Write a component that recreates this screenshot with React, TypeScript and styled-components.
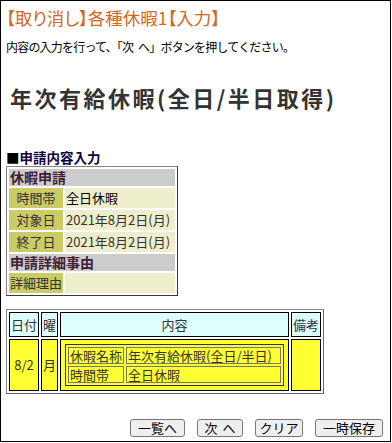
import React from "react";
import styled, { createGlobalStyle } from "styled-components";

const GlobalStyle = createGlobalStyle`
  html, body { margin: 0; padding: 0; background: #fff; }
  body { font-family: "Noto Sans CJK JP", "Noto Sans", sans-serif; }
  * { box-sizing: border-box; }
`;

const Frame = styled.div`
  width: 391px;
  height: 442px;
  border: 1px solid #000;
  padding: 6px 7px 0 5px;
  display: flex;
  flex-direction: column;
  align-items: flex-start;
  background: #fff;
`;

const Title = styled.h1`
  margin: 0;
  font-size: 17.5px;
  font-weight: normal;
  line-height: 21px;
  color: #d2691e;
  font-feature-settings: "palt";
  white-space: nowrap;
`;

const Instruction = styled.p`
  margin: 11px 0 0;
  font-size: 12px;
  line-height: 16px;
  letter-spacing: -0.8px;
  word-spacing: 3px;
  color: #000;
  white-space: pre;
`;

const Heading = styled.h2`
  margin: 28px 0 0 4px;
  font-size: 22px;
  font-weight: bold;
  line-height: 28px;
  letter-spacing: 2.5px;
  color: #333;
  white-space: nowrap;
`;

const SectionLabel = styled.div`
  margin-top: 38px;
  font-size: 13.5px;
  font-weight: bold;
  line-height: 17px;
  color: #100040;
  white-space: nowrap;
`;

const Square = styled.span`
  color: #000;
`;

const FormTable = styled.table`
  border-collapse: separate;
  border-spacing: 2px;
  border: 1px solid;
  border-color: #858585 #383838 #383838 #858585;
  table-layout: fixed;
  width: 172px;
`;

const GroupHeader = styled.td`
  height: 17px;
  padding: 0 1px;
  background: #cccccc;
  font-size: 14px;
  font-weight: bold;
  line-height: 17px;
  color: #402038;
  white-space: nowrap;
`;

const Label = styled.td`
  height: 20px;
  padding: 0;
  background: #cccc66;
  font-size: 13px;
  line-height: 20px;
  text-align: center;
  color: #333;
  white-space: nowrap;
`;

const Value = styled.td<{ $dark?: boolean }>`
  height: 20px;
  padding: 0 1px;
  background: #eeeecc;
  font-size: 13px;
  line-height: 20px;
  color: ${(p) => (p.$dark ? "#000" : "#333")};
  white-space: nowrap;
  overflow: hidden;
`;

const ScheduleTable = styled.table`
  margin-top: 13px;
  border-collapse: separate;
  border-spacing: 2px;
  border: 1px solid;
  border-color: #888 #666 #666 #888;
  table-layout: fixed;
  width: 318px;
`;

const HeadCell = styled.th`
  height: 25px;
  padding: 0;
  border: 1px solid #000;
  background: #dfffff;
  font-size: 13px;
  font-weight: normal;
  line-height: 23px;
  text-align: center;
  color: #333;
  white-space: nowrap;
  overflow: hidden;
`;

const DataCell = styled.td<{ $pad?: boolean }>`
  height: 52px;
  padding: ${(p) => (p.$pad ? "0 4px" : "0")};
  border: 1px solid #000;
  background: #ffff33;
  font-size: 13px;
  line-height: 16px;
  text-align: center;
  vertical-align: middle;
  color: #333;
  white-space: nowrap;
  overflow: hidden;
`;

const DetailTable = styled.table`
  border-collapse: separate;
  border-spacing: 2px;
  border: 1px solid #333;
  table-layout: fixed;
  width: 219px;
`;

const DetailCell = styled.td`
  height: 17px;
  padding: 0 1px;
  border: 1px solid #777;
  background: #ffff33;
  font-size: 13px;
  line-height: 15px;
  text-align: left;
  color: #333;
  white-space: nowrap;
  overflow: hidden;
`;

const ButtonRow = styled.div`
  align-self: stretch;
  display: flex;
  justify-content: flex-end;
  gap: 12px;
  margin-top: 25px;
`;

const Button = styled.button<{ $w: number }>`
  width: ${(p) => p.$w}px;
  height: 18px;
  padding: 0;
  border: 1px solid #767676;
  border-radius: 3px;
  background: #efefef;
  font-family: "Noto Sans CJK JP", sans-serif;
  font-size: 13px;
  line-height: 16px;
  word-spacing: 2px;
  color: #000;
  white-space: pre;
`;

export default function App() {
  return (
    <>
      <GlobalStyle />
      <Frame>
        <Title>【取り消し】各種休暇1【入力】</Title>
        <Instruction>内容の入力を行って、「次 へ」ボタンを押してください。</Instruction>
        <Heading>年次有給休暇(全日/半日取得)</Heading>
        <SectionLabel>
          <Square>■</Square>申請内容入力
        </SectionLabel>
        <FormTable>
          <colgroup>
            <col style={{ width: 54 }} />
            <col style={{ width: 110 }} />
          </colgroup>
          <tbody>
            <tr>
              <GroupHeader colSpan={2}>休暇申請</GroupHeader>
            </tr>
            <tr>
              <Label>時間帯</Label>
              <Value $dark>全日休暇</Value>
            </tr>
            <tr>
              <Label>対象日</Label>
              <Value>2021年8月2日(月)</Value>
            </tr>
            <tr>
              <Label>終了日</Label>
              <Value>2021年8月2日(月)</Value>
            </tr>
            <tr>
              <GroupHeader colSpan={2}>申請詳細事由</GroupHeader>
            </tr>
            <tr>
              <Label>詳細理由</Label>
              <Value></Value>
            </tr>
          </tbody>
        </FormTable>
        <ScheduleTable>
          <colgroup>
            <col style={{ width: 30 }} />
            <col style={{ width: 17 }} />
            <col style={{ width: 229 }} />
            <col style={{ width: 30 }} />
          </colgroup>
          <thead>
            <tr>
              <HeadCell>日付</HeadCell>
              <HeadCell>曜</HeadCell>
              <HeadCell>内容</HeadCell>
              <HeadCell>備考</HeadCell>
            </tr>
          </thead>
          <tbody>
            <tr>
              <DataCell>8/2</DataCell>
              <DataCell>月</DataCell>
              <DataCell $pad>
                <DetailTable>
                  <colgroup>
                    <col style={{ width: 56 }} />
                    <col style={{ width: 155 }} />
                  </colgroup>
                  <tbody>
                    <tr>
                      <DetailCell>休暇名称</DetailCell>
                      <DetailCell>年次有給休暇(全日/半日)</DetailCell>
                    </tr>
                    <tr>
                      <DetailCell>時間帯</DetailCell>
                      <DetailCell>全日休暇</DetailCell>
                    </tr>
                  </tbody>
                </DetailTable>
              </DataCell>
              <DataCell></DataCell>
            </tr>
          </tbody>
        </ScheduleTable>
        <ButtonRow>
          <Button $w={55}>一覧へ</Button>
          <Button $w={46}>次 へ</Button>
          <Button $w={48}>クリア</Button>
          <Button $w={68}>一時保存</Button>
        </ButtonRow>
      </Frame>
    </>
  );
}
